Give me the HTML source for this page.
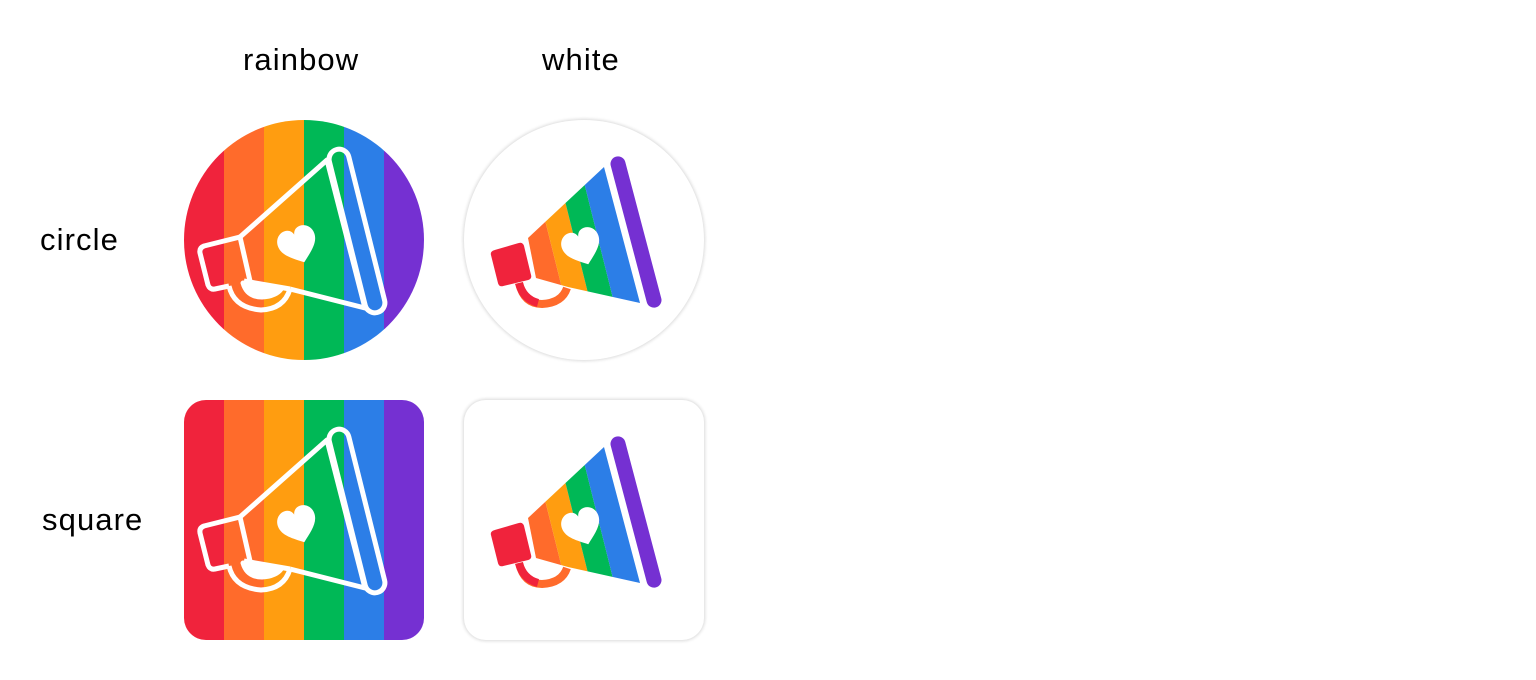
<!DOCTYPE html>
<html><head><meta charset="utf-8"><style>
body{margin:0;width:1536px;height:680px;background:#fff;font-family:"Liberation Sans",sans-serif;position:relative;overflow:hidden}
.t{position:absolute;font-size:31px;color:#000;line-height:1;letter-spacing:1.1px}
.ic{position:absolute;width:240px;height:240px;overflow:hidden}
.wh{box-shadow:0 0 3px 1px rgba(0,0,0,.15);background:#fff}
svg{display:block}
</style></head><body>
<div class="t" style="left:243px;top:44px">rainbow</div>
<div class="t" style="left:542px;top:44px">white</div>
<div class="t" style="left:40px;top:224px">circle</div>
<div class="t" style="left:42px;top:504px">square</div>

<svg width="0" height="0" style="position:absolute">
<defs>
<g id="stripes">
<rect x="0" y="0" width="40" height="240" fill="#f0233c"/>
<rect x="40" y="0" width="40" height="240" fill="#ff6b2b"/>
<rect x="80" y="0" width="40" height="240" fill="#ff9d10"/>
<rect x="120" y="0" width="40" height="240" fill="#00b856"/>
<rect x="160" y="0" width="40" height="240" fill="#2c7ee7"/>
<rect x="200" y="0" width="40" height="240" fill="#7530d2"/>
</g>
<g id="outline" fill="none" stroke="#fff" stroke-width="5" stroke-linejoin="round">
<rect x="-10" y="-84" width="20" height="168" rx="10" transform="translate(173,111) rotate(-14)"/>
<path d="M56,117 L143,40 L181,188 L106,169"/>
<path d="M56,117 L20,126 Q15,128 16,133 L24,165 Q26,170 31,169 L45,166"/>
<path d="M56,117 L66,161"/>
<path d="M45,166 Q50,188 77,190 Q100,189 106,169"/>
<path d="M60,161 L106,169" />
<path d="M59,163 Q63,177 78,177 Q92,176 97,169 Z" fill="#fff"/>
</g>
<path id="heart" d="M0,20 C-10,12 -21,5 -21,-6 C-21,-14 -15,-19 -9,-19 C-4,-19 -1,-16 0,-12 C1,-16 4,-19 9,-19 C15,-19 21,-14 21,-6 C21,5 10,12 0,20 Z" fill="#fff"/>
<clipPath id="cone"><path d="M64,118 L140,47 L176,183 L104,167 L72,158 Z"/></clipPath>
<g id="whiteicon">
<g clip-path="url(#cone)"><g transform="rotate(-14,120,120)">
<rect x="30" y="0" width="33" height="240" fill="#f0233c"/>
<rect x="63" y="0" width="24" height="240" fill="#ff6b2b"/>
<rect x="87" y="0" width="24" height="240" fill="#ff9d10"/>
<rect x="111" y="0" width="23" height="240" fill="#00b856"/>
<rect x="134" y="0" width="60" height="240" fill="#2c7ee7"/>
</g></g>
<path d="M62,162 Q65,176 80,177 Q95,176 100,168 Z" fill="#fff"/>
<rect x="-7.5" y="-78" width="15" height="156" rx="7.5" transform="translate(172,112) rotate(-14.8)" fill="#7530d2"/>
<path d="M31,131 L55,124 Q58,123 59,126 L66,155 Q67,158 64,159 L39,165 Q36,166 35,163 L28,135 Q27,132 31,131 Z" fill="#f0233c" stroke="#f0233c" stroke-width="2" stroke-linejoin="round"/>
<path d="M55,163 Q60,184 78,184 Q98,183 103,168" fill="none" stroke="#ff6b2b" stroke-width="8"/>
<path d="M55,163 Q59,179 74,183" fill="none" stroke="#f0233c" stroke-width="8"/>
<use href="#heart" transform="translate(118,127) rotate(-20) scale(0.92)"/>
</g>
</defs>
</svg>

<div class="ic" style="left:184px;top:120px;border-radius:50%">
<svg width="240" height="240"><use href="#stripes"/><use href="#outline"/><use href="#heart" transform="translate(114,125) rotate(-20) scale(0.92)"/></svg>
</div>
<div class="ic" style="left:184px;top:400px;border-radius:22px">
<svg width="240" height="240"><use href="#stripes"/><use href="#outline"/><use href="#heart" transform="translate(114,125) rotate(-20) scale(0.92)"/></svg>
</div>

<div class="ic wh" style="left:464px;top:120px;border-radius:50%">
<svg width="240" height="240"><use href="#whiteicon"/></svg>
</div>
<div class="ic wh" style="left:464px;top:400px;border-radius:22px">
<svg width="240" height="240"><use href="#whiteicon"/></svg>
</div>
</body></html>
